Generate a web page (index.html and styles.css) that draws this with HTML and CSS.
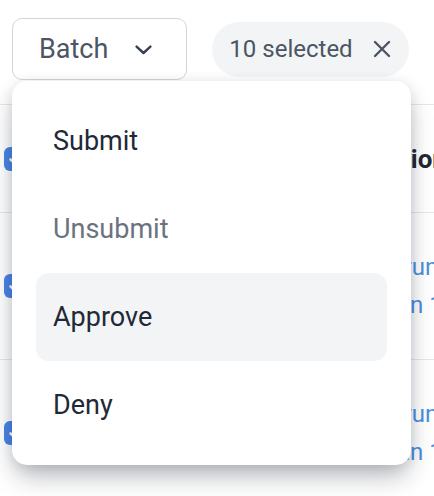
FILE: index.html
```html
<!DOCTYPE html>
<html lang="en">
<head>
<meta charset="utf-8">
<title>Batch menu</title>
<link rel="stylesheet" href="styles.css">
</head>
<body>
<div class="page">
  <div class="toolbar">
    <button class="batch" type="button">
      <span>Batch</span>
      <svg class="chev" width="17" height="10" viewBox="0 0 17 10"><path d="M1.6 1.6 L8.5 8 L15.4 1.6" fill="none" stroke="currentColor" stroke-width="2.4" stroke-linecap="round" stroke-linejoin="round"/></svg>
    </button>
    <div class="chip">
      <span>10 selected</span>
      <svg class="x" width="18" height="18" viewBox="0 0 18 18"><path d="M2 2 L16 16 M16 2 L2 16" fill="none" stroke="currentColor" stroke-width="2.4" stroke-linecap="round"/></svg>
    </div>
    <a class="select-all" href="#">Select all 25</a>
  </div>

  <div class="table">
    <div class="row head">
      <span class="cb"><svg width="24" height="24" viewBox="0 0 24 24"><path d="M6.5 12.5 L10.5 16 L17.5 8.5" fill="none" stroke="#fff" stroke-width="2.6" stroke-linecap="round" stroke-linejoin="round"/></svg></span>
      <span class="name"></span>
      <span class="col">Action</span>
    </div>
    <div class="row">
      <span class="cb"><svg width="24" height="24" viewBox="0 0 24 24"><path d="M6.5 12.5 L10.5 16 L17.5 8.5" fill="none" stroke="#fff" stroke-width="2.6" stroke-linecap="round" stroke-linejoin="round"/></svg></span>
      <span class="name"></span>
      <span class="col link">Rerun<br>Plan 1</span>
    </div>
    <div class="row">
      <span class="cb"><svg width="24" height="24" viewBox="0 0 24 24"><path d="M6.5 12.5 L10.5 16 L17.5 8.5" fill="none" stroke="#fff" stroke-width="2.6" stroke-linecap="round" stroke-linejoin="round"/></svg></span>
      <span class="name"></span>
      <span class="col link">Rerun<br>Plan 1</span>
    </div>
  </div>

  <div class="menu">
    <div class="item">Submit</div>
    <div class="item disabled">Unsubmit</div>
    <div class="item active">Approve</div>
    <div class="item">Deny</div>
  </div>
</div>
</body>
</html>
```

FILE: styles.css
```css
html, body {
  margin: 0;
  padding: 0;
  background: #ffffff;
  overflow: hidden;
}

body {
  font-family: Roboto, "Liberation Sans", Arial, sans-serif;
  color: #1f2937;
}

.page {
  position: relative;
  width: 640px;
  padding-top: 18px;
}

.toolbar {
  display: flex;
  align-items: center;
  gap: 25px;
  padding-left: 12px;
}

.batch {
  display: flex;
  align-items: center;
  gap: 27px;
  height: 62px;
  padding: 0 34px 0 26px;
  background: #fff;
  border: 1px solid #d1d5db;
  border-radius: 10px;
  font-family: inherit;
  font-size: 27px;
  color: #4b5563;
}

.chev {
  color: #374151;
  margin-top: 2px;
}

.chip {
  display: flex;
  align-items: center;
  gap: 20px;
  height: 55px;
  padding: 0 18px 0 17px;
  background: #f3f4f6;
  border-radius: 28px;
  font-size: 24px;
  color: #4b5563;
}

.x {
  color: #4b5563;
}

.select-all {
  font-size: 24px;
  color: #3b82f6;
  text-decoration: none;
  white-space: nowrap;
}

.table {
  margin-top: 24px;
  border-top: 1px solid #e5e7eb;
}

.row {
  display: grid;
  grid-template-columns: 24px 324px 1fr;
  column-gap: 12px;
  align-items: center;
  height: 146px;
  padding-left: 4px;
  border-bottom: 1px solid #e5e7eb;
  font-size: 24px;
}

.row.head {
  height: 107px;
  font-weight: 700;
  font-size: 26px;
  color: #1f2937;
}

.row.head .col {
  margin-left: -5px;
}

.cb {
  display: block;
  width: 24px;
  height: 24px;
  border-radius: 6px;
  background: #4a86e8;
}

.cb svg {
  display: block;
}

.link {
  color: #4a90e2;
  line-height: 38px;
}

.menu {
  position: absolute;
  top: 81px;
  left: 12px;
  width: 351px;
  padding: 16px 24px;
  background: #fff;
  border-radius: 15px;
  box-shadow: 0 14px 26px -4px rgba(17, 24, 39, 0.32), 0 2px 14px rgba(17, 24, 39, 0.10);
}

.item {
  display: flex;
  align-items: center;
  height: 88px;
  padding-left: 17px;
  border-radius: 13px;
  font-size: 27px;
  color: #1f2937;
}

.item.disabled {
  color: #6b7280;
}

.item.active {
  background: #f3f4f6;
}
```
